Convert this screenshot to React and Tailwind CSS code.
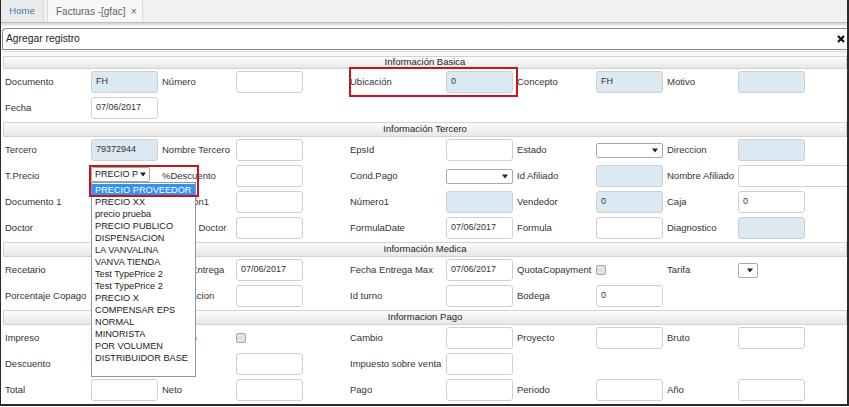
import React from "react";

const cols = "grid grid-cols-[86px_71px_74px_114px_96px_71px_79px_71px_71px_1fr] h-[26px] ml-[2px]";

const L = (v) => ({ k: "l", v });
const I = (v = "", blue = false) => ({ k: "i", v, blue });
const B = (v = "") => ({ k: "i", v, blue: true });
const W = () => ({ k: "w" });
const S = (w, v = "") => ({ k: "s", w, v });
const C = () => ({ k: "c" });
const E = () => ({ k: "e" });

const Arrow = () => (
  <svg width="6" height="5" viewBox="0 0 6 5" className="shrink-0">
    <path d="M0 0.5 L6 0.5 L3 4.5 Z" fill="#222" />
  </svg>
);

const Cell = ({ c }) => {
  if (c.k === "l")
    return (
      <div className="flex items-center pl-[2px] text-[9.5px] text-[#333] whitespace-nowrap">{c.v}</div>
    );
  if (c.k === "i")
    return (
      <div className="flex items-center pl-[2px]">
        <div
          className={`h-[22px] w-[67px] shrink-0 rounded-[3px] border border-[#cfcfcf] flex items-center px-[4px] text-[9px] text-[#333] ${
            c.blue ? "bg-[#dbe9f2]" : "bg-white"
          }`}
        >
          {c.v}
        </div>
      </div>
    );
  if (c.k === "w")
    return (
      <div className="flex items-center pl-[2px]">
        <div className="h-[22px] w-[120px] shrink-0 rounded-[3px] border border-[#cfcfcf] bg-white" />
      </div>
    );
  if (c.k === "s")
    return (
      <div className="flex items-center pl-[2px]">
        <div
          className="h-[15px] shrink-0 rounded-[2px] border border-[#a9a9a9] bg-white flex items-center justify-end pr-[4px] text-[9px] text-[#222]"
          style={{ width: c.w }}
        >
          <Arrow />
        </div>
      </div>
    );
  if (c.k === "c")
    return (
      <div className="flex items-center pl-[2px]">
        <div className="w-[10px] h-[10px] rounded-[2px] border border-[#a3a3a3] bg-[#e4e4e4]" />
      </div>
    );
  return <div />;
};

const Row = ({ cells }) => (
  <div className={cols}>
    {cells.map((c, i) => (
      <Cell key={i} c={c} />
    ))}
  </div>
);

const Header = ({ title, first }) => (
  <div
    className={`${first ? "h-[13px]" : "h-[15px] mt-[1px]"} ml-[2px] border border-[#d2d2d2] bg-linear-to-b from-[#fdfdfd] to-[#e7e7e7] flex items-center justify-center text-[9.5px] text-[#222]`}
  >
    {title}
  </div>
);

const opciones = [
  "PRECIO PROVEEDOR",
  "PRECIO XX",
  "precio prueba",
  "PRECIO PUBLICO",
  "DISPENSACION",
  "LA VANVALINA",
  "VANVA TIENDA",
  "Test TypePrice 2",
  "Test TypePrice 2",
  "PRECIO X",
  "COMPENSAR EPS",
  "NORMAL",
  "MINORISTA",
  "POR VOLUMEN",
  "DISTRIBUIDOR BASE",
];

export default function App() {
  const fecha = "07/06/2017";
  return (
    <div className="relative w-[849px] h-[406px] overflow-hidden bg-white border-l border-r-2 border-b-2 border-[#2a2a2a] font-['Liberation_Sans',Arial,sans-serif]">
      {/* pestañas */}
      <div className="h-[22px] bg-[#f1f1f1] flex">
        <div className="h-[22px] w-[43px] bg-[#ebebeb] border-r border-[#dadada] flex items-center justify-center text-[9.5px] text-[#2f7bbb]">
          Home
        </div>
        <div className="ml-[3px] h-[22px] w-[96px] bg-[#f7f7f7] border-x border-[#dadada] flex items-center pl-[8px] text-[10px] text-[#666]">
          Facturas -[gfac]
          <span className="ml-[5px] text-[#2f7bbb] text-[11px]">×</span>
        </div>
      </div>
      <div className="h-[4px] border-t border-[#bcbcbc] bg-linear-to-b from-[#d4d4d4] to-[#f0f0f0]" />

      <div className="mt-[2px] ml-[1px] h-[22px] rounded-tl-[4px] border border-r-0 border-[#8c8c8c] flex items-center justify-between pl-[3px] pr-[2px]">
        <span className="text-[10.3px] text-[#222]">Agregar registro</span>
        <svg width="8" height="8" viewBox="0 0 8 8">
          <path d="M1 1 L7 7 M7 1 L1 7" stroke="#111" strokeWidth="2.2" />
        </svg>
      </div>
      <div className="mt-[1px] ml-[2px] h-[5px] border-t border-[#e0e0e0] bg-[#fafafa]" />

      <Header title="Información Basica" first />
      <Row cells={[L("Documento"), B("FH"), L("Número"), I(), L("Ubicación"), B("0"), L("Concepto"), B("FH"), L("Motivo"), B()]} />
      <Row cells={[L("Fecha"), I(fecha), E(), E(), E(), E(), E(), E(), E(), E()]} />

      <Header title="Información Tercero" />
      <Row cells={[L("Tercero"), B("79372944"), L("Nombre Tercero"), I(), L("EpsId"), I(), L("Estado"), S(67), L("Direccion"), B()]} />
      <Row cells={[L("T.Precio"), E(), L("%Descuento"), I(), L("Cond.Pago"), S(67), L("Id Afiliado"), B(), L("Nombre Afiliado"), W()]} />
      <Row cells={[L("Documento 1"), I(), L("Ubicación1"), I(), L("Número1"), B(), L("Vendedor"), B("0"), L("Caja"), I("0")]} />
      <Row cells={[L("Doctor"), I(), L("Nombre Doctor"), I(), L("FormulaDate"), I(fecha), L("Formula"), I(), L("Diagnostico"), B()]} />

      <Header title="Información Medica" />
      <Row cells={[L("Recetario"), I(), L("Fecha Entrega"), I(fecha), L("Fecha Entrega Max"), I(fecha), L("QuotaCopayment"), C(), L("Tarifa"), S(20)]} />
      <Row cells={[L("Porcentaje Copago"), I(), L("Autorizacion"), I(), L("Id turno"), I(), L("Bodega"), I("0"), E(), E()]} />

      <Header title="Informacion Pago" />
      <Row cells={[L("Impreso"), C(), L("Anulado"), C(), L("Cambio"), I(), L("Proyecto"), I(), L("Bruto"), I()]} />
      <Row cells={[L("Descuento"), I(), E(), I(), L("Impuesto sobre venta"), I(), E(), E(), E(), E()]} />
      <Row cells={[L("Total"), I(), L("Neto"), I(), L("Pago"), I(), L("Periodo"), I(), L("Año"), I()]} />

      {/* select abierto de T.Precio */}
      <div className="absolute left-[90px] top-[167px] w-[59px] h-[15px] rounded-[2px] border border-[#a9a9a9] bg-white flex items-center pl-[3px] pr-[3px] gap-[2px]">
        <div className="flex-1 overflow-hidden whitespace-nowrap text-[9px] text-[#222] leading-none">PRECIO PROVEEDOR</div>
        <Arrow />
      </div>
      <div className="absolute left-[90px] top-[182px] w-[105px] h-[195px] border border-[#7f9db9] bg-white pt-[1px]">
        {opciones.map((o, i) => (
          <div
            key={i}
            className={`h-[12px] leading-[12px] pl-[3px] text-[9.2px] whitespace-nowrap ${
              i === 0 ? "bg-[#3392f4] text-white" : "text-[#222]"
            }`}
          >
            {o}
          </div>
        ))}
      </div>

      {/* marcas rojas */}
      <div className="absolute left-[348px] top-[67px] w-[169px] h-[30px] border-2 border-[#c4161c]" />
      <div className="absolute left-[88px] top-[165px] w-[110px] h-[32px] border-2 border-[#c4161c]" />
    </div>
  );
}
